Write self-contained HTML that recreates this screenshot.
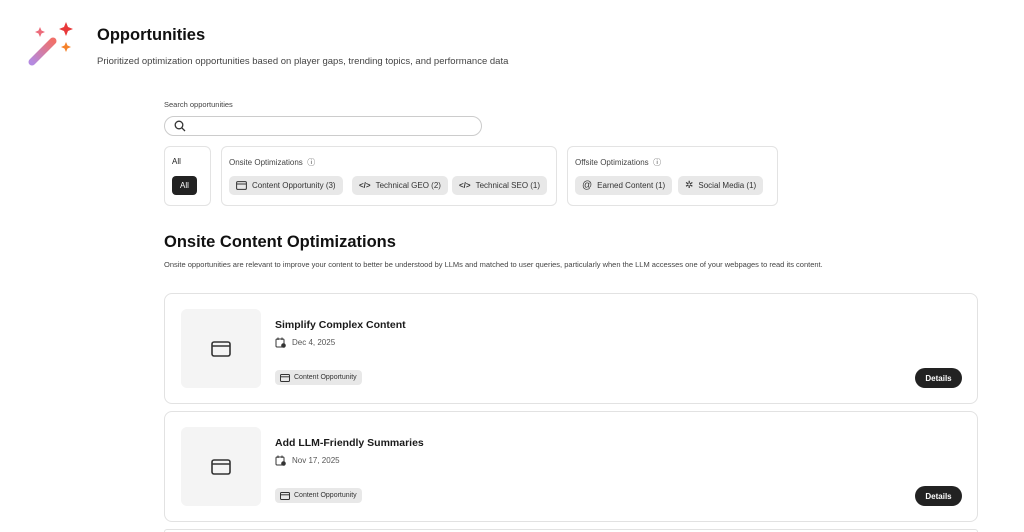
<!DOCTYPE html>
<html style="width:1024px;height:532px;overflow:hidden"><head><style>
*{margin:0;padding:0;box-sizing:border-box}
body{width:1024px;height:532px;overflow:hidden;background:#fff;font-family:"Liberation Sans",sans-serif;color:#222;position:relative}
.a{position:absolute}
.box{position:absolute;border:1px solid #e3e3e3;border-radius:6px;background:#fff}
.chip{position:absolute;height:19px;background:#e8e8e8;border-radius:5px;font-size:8px;color:#333;display:flex;align-items:center;padding:0 7px;gap:5px;white-space:nowrap}
.card{position:absolute;left:164px;width:814px;height:111px;border:1px solid #e2e2e2;border-radius:8px}
.thumb{position:absolute;left:16px;top:15px;width:80px;height:79px;background:#f4f4f4;border-radius:6px;display:flex;align-items:center;justify-content:center}
.ct{position:absolute;left:110px;top:25px;font-size:10.5px;font-weight:bold;color:#1a1a1a}
.cd{position:absolute;left:110px;top:43px;font-size:8px;color:#555;display:flex;align-items:center;gap:6px}
.cc{position:absolute;left:110px;top:76px;height:15px;background:#e8e8e8;border-radius:4px;font-size:7px;display:flex;align-items:center;gap:4px;padding:0 5px;color:#333}
.btn{position:absolute;left:750px;top:74px;width:47px;height:20px;background:#222;color:#fff;border-radius:10px;font-size:8px;font-weight:bold;display:flex;align-items:center;justify-content:center}
</style></head><body>
<svg class="a" style="left:26px;top:20px" width="50" height="48" viewBox="0 0 50 48">
<defs><linearGradient id="g" x1="0" y1="1" x2="1" y2="0"><stop offset="0" stop-color="#b48ae0"/><stop offset="1" stop-color="#f0706a"/></linearGradient></defs>
<line x1="6" y1="42" x2="27" y2="21" stroke="url(#g)" stroke-width="7" stroke-linecap="round"/>
<path d="M14 7l1.5 3.5 3.5 1.5-3.5 1.5-1.5 3.5-1.5-3.5-3.5-1.5 3.5-1.5z" fill="#ec6b7a"/>
<path d="M40 2l2 5 5 2-5 2-2 5-2-5-5-2 5-2z" fill="#e8383a"/>
<path d="M40 22l1.5 3.5 3.5 1.5-3.5 1.5-1.5 3.5-1.5-3.5-3.5-1.5 3.5-1.5z" fill="#f5822a"/>
</svg>
<div class="a" style="left:97px;top:26px;font-size:16.5px;font-weight:bold;color:#111">Opportunities</div>
<div class="a" style="left:97px;top:56px;font-size:9.5px;color:#444">Prioritized optimization opportunities based on player gaps, trending topics, and performance data</div>
<div class="a" style="left:164px;top:100px;font-size:7.5px;color:#444">Search opportunities</div>
<div class="a" style="left:164px;top:116px;width:318px;height:20px;border:1.5px solid #ccc;border-radius:10px">
<svg class="a" style="left:9px;top:3px" width="12" height="12" viewBox="0 0 12 12"><circle cx="5" cy="5" r="3.8" fill="none" stroke="#333" stroke-width="1.3"/><line x1="7.8" y1="7.8" x2="11" y2="11" stroke="#333" stroke-width="1.3"/></svg></div>
<div class="box" style="left:164px;top:146px;width:47px;height:60px"><div class="a" style="left:7px;top:10px;font-size:8px">All</div><div class="a" style="left:7px;top:29px;width:25px;height:19px;background:#222;border-radius:4px;color:#fff;font-size:8px;display:flex;align-items:center;justify-content:center">All</div></div>
<div class="box" style="left:221px;top:146px;width:336px;height:60px"><div class="a" style="left:7px;top:10px;font-size:8px;color:#444">Onsite Optimizations &nbsp;ⓘ</div>
<div class="chip" style="left:7px;top:29px"><svg width="11" height="9"><rect x="0.6" y="0.6" width="9.8" height="7.8" rx="1.2" fill="none" stroke="#333"/><line x1="0.6" y1="3" x2="10.4" y2="3" stroke="#333"/></svg>Content Opportunity (3)</div>
<div class="chip" style="left:130px;top:29px"><b>&lt;/&gt;</b>Technical GEO (2)</div>
<div class="chip" style="left:230px;top:29px"><b>&lt;/&gt;</b>Technical SEO (1)</div></div>
<div class="box" style="left:567px;top:146px;width:211px;height:60px"><div class="a" style="left:7px;top:10px;font-size:8px;color:#444">Offsite Optimizations &nbsp;ⓘ</div>
<div class="chip" style="left:7px;top:29px"><span style="font-size:10px">@</span>Earned Content (1)</div>
<div class="chip" style="left:110px;top:29px"><span style="font-size:10px">✲</span>Social Media (1)</div></div>
<div class="a" style="left:164px;top:233px;font-size:16.5px;font-weight:bold;color:#111">Onsite Content Optimizations</div>
<div class="a" style="left:164px;top:260px;font-size:7.5px;color:#444">Onsite opportunities are relevant to improve your content to better be understood by LLMs and matched to user queries, particularly when the LLM accesses one of your webpages to read its content.</div>
<div class="card" style="top:293px"><div class="thumb"><svg width="20" height="16"><rect x="1" y="1" width="18" height="14" rx="2" fill="none" stroke="#333" stroke-width="1.6"/><line x1="1" y1="5" x2="19" y2="5" stroke="#333" stroke-width="1.6"/></svg></div>
<div class="ct">Simplify Complex Content</div><div class="cd"><svg width="11" height="11" viewBox="0 0 11 11"><rect x="1" y="2" width="8" height="8" rx="1" fill="none" stroke="#333"/><line x1="3" y1="0.5" x2="3" y2="3" stroke="#333"/><line x1="7" y1="0.5" x2="7" y2="3" stroke="#333"/><circle cx="8.5" cy="8.5" r="2.3" fill="#333"/></svg>Dec 4, 2025</div>
<div class="cc"><svg width="10" height="8"><rect x="0.5" y="0.5" width="9" height="7" rx="1" fill="none" stroke="#333"/><line x1="0.5" y1="2.8" x2="9.5" y2="2.8" stroke="#333"/></svg>Content Opportunity</div><div class="btn">Details</div></div>
<div class="card" style="top:411px"><div class="thumb"><svg width="20" height="16"><rect x="1" y="1" width="18" height="14" rx="2" fill="none" stroke="#333" stroke-width="1.6"/><line x1="1" y1="5" x2="19" y2="5" stroke="#333" stroke-width="1.6"/></svg></div>
<div class="ct">Add LLM-Friendly Summaries</div><div class="cd"><svg width="11" height="11" viewBox="0 0 11 11"><rect x="1" y="2" width="8" height="8" rx="1" fill="none" stroke="#333"/><line x1="3" y1="0.5" x2="3" y2="3" stroke="#333"/><line x1="7" y1="0.5" x2="7" y2="3" stroke="#333"/><circle cx="8.5" cy="8.5" r="2.3" fill="#333"/></svg>Nov 17, 2025</div>
<div class="cc"><svg width="10" height="8"><rect x="0.5" y="0.5" width="9" height="7" rx="1" fill="none" stroke="#333"/><line x1="0.5" y1="2.8" x2="9.5" y2="2.8" stroke="#333"/></svg>Content Opportunity</div><div class="btn">Details</div></div>
<div class="a" style="left:164px;top:529px;width:814px;height:3px;border:1px solid #e2e2e2;border-bottom:none;border-radius:8px 8px 0 0"></div>
</body></html>
